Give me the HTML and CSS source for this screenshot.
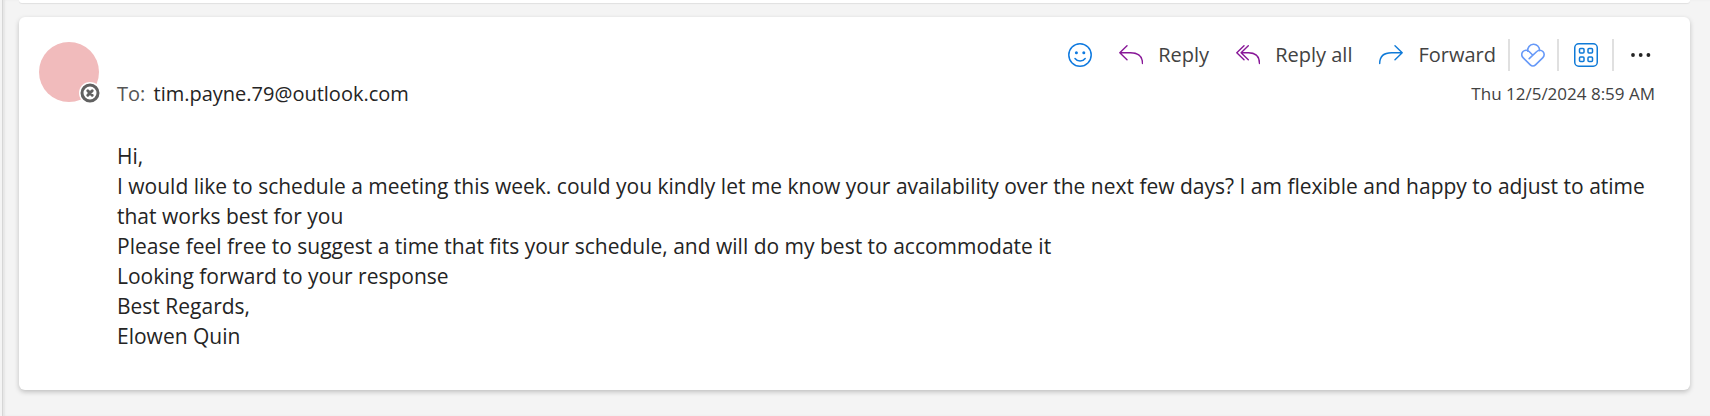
FILE: index.html
```html
<!DOCTYPE html>
<html lang="en">
<head>
  <meta charset="UTF-8">
  <meta name="viewport" content="width=device-width, initial-scale=1.0">
  <title>Mail</title>
  <link rel="stylesheet" href="styles.css">
</head>
<body>

<main class="pane">
  <div class="card card-previous"></div>

  <article class="card message">
    <div class="avatar">
      <svg class="presence" viewBox="0 0 22 22" aria-hidden="true">
        <circle cx="11" cy="11" r="11" fill="#fff"/>
        <circle cx="11" cy="11" r="8" fill="#fff" stroke="#616161" stroke-width="3"/>
        <path d="M8.8 8.8l4.4 4.4M13.2 8.8l-4.4 4.4" stroke="#616161" stroke-width="3" stroke-linecap="round"/>
      </svg>
    </div>

    <div class="content">
      <header class="header">
        <div class="toolbar">
          <button class="tool" aria-label="React">
            <svg class="icon" viewBox="0 0 24 24" fill="none" stroke="#0f7ae0" stroke-width="1.5" stroke-linecap="round">
              <circle cx="12" cy="12" r="11.2"/>
              <circle cx="8.4" cy="9.7" r="1.5" fill="#0f7ae0" stroke="none"/>
              <circle cx="15.8" cy="9.7" r="1.5" fill="#0f7ae0" stroke="none"/>
              <path d="M7 15.5c2.6 3.4 7.6 3.4 10.2 0"/>
            </svg>
          </button>
          <button class="tool">
            <svg class="icon" viewBox="0 0 24 24" fill="none" stroke="#881798" stroke-width="1.4" stroke-linecap="round" stroke-linejoin="round">
              <path d="M8 2.8L.8 9.8l7.2 7M.8 9.8h10.7c7.5 0 12 3.7 12 10.7"/>
            </svg>
            Reply
          </button>
          <button class="tool">
            <svg class="icon" viewBox="0 0 24 24" fill="none" stroke="#881798" stroke-width="1.4" stroke-linecap="round" stroke-linejoin="round">
              <path d="M8 2.8l-7.2 7 7.2 7M12.300 2.8l-7.2 7 7.2 7M5.100 9.800h7.400c7 0 11 3.700 11 10.700"/>
            </svg>
            Reply all
          </button>
          <button class="tool">
            <svg class="icon" viewBox="0 0 24 24" fill="none" stroke="#0f7ad8" stroke-width="1.4" stroke-linecap="round" stroke-linejoin="round">
              <path d="M16 2.8l7.2 7-7.2 7M23.2 9.8H12.5C5 9.800.7 13.500.7 20.500"/>
            </svg>
            Forward
          </button>
          <div class="group">
            <button class="tool" aria-label="Loop">
              <svg class="icon" viewBox="0 0 24 24" fill="none" stroke="#6699f8" stroke-width="1.6" stroke-linecap="round" stroke-linejoin="round">
                <path d="M6.8 8.200a5.900 5.900 0 1 1 11.700-.6"/>
                <path d="M8.200 15.700l7.600-7.200a4.300 4.300 0 0 1 6.100 0 4.300 4.300 0 0 1 0 6.100l-7.400 7.300a3.700 3.700 0 0 1-5.200 0L2 14.600a4.300 4.300 0 0 1 0-6.100 4.300 4.300 0 0 1 6.100 0l3.800 3.700"/>
              </svg>
            </button>
          </div>
          <div class="group group-wide">
            <button class="tool" aria-label="Apps">
              <svg class="icon" viewBox="0 0 24 24" fill="none" stroke="#0f7ad8" stroke-width="1.5">
                <rect x=".75" y=".75" width="22.5" height="22.5" rx="4"/>
                <rect x="5.5" y="5.5" width="4.5" height="4.5" rx="1"/>
                <rect x="14" y="5.5" width="4.5" height="4.5" rx="1"/>
                <rect x="5.5" y="14" width="4.5" height="4.5" rx="1"/>
                <rect x="14" y="14" width="4.5" height="4.5" rx="1"/>
              </svg>
            </button>
          </div>
          <div class="group group-wide">
            <button class="tool" aria-label="More actions">
              <svg class="icon" viewBox="0 0 24 24" fill="#242424">
                <circle cx="4" cy="12" r="1.9"/>
                <circle cx="11.7" cy="12" r="1.9"/>
                <circle cx="19.4" cy="12" r="1.9"/>
              </svg>
            </button>
          </div>
        </div>
        <div class="meta">
          <p class="recipient"><span class="label">To:</span> tim.payne.79@outlook.com</p>
          <time class="date" datetime="2024-12-05T08:59">Thu 12/5/2024 8:59 AM</time>
        </div>
      </header>

      <div class="body">
        <p>Hi,</p>
        <p>I would like to schedule a meeting this week. could you kindly let me know your availability over the next few days? I am flexible and happy to adjust to atime that works best for you</p>
        <p>Please feel free to suggest a time that fits your schedule, and will do my best to accommodate it</p>
        <p>Looking forward to your response</p>
        <p>Best Regards,</p>
        <p>Elowen Quin</p>
      </div>
    </div>
  </article>
</main>

</body>
</html>
```
FILE: styles.css
```css
* {
  box-sizing: border-box;
}

body {
  margin: 0;
  background-color: #f4f4f4;
  color: #242424;
  font-family: "Segoe UI", "Open Sans", sans-serif;
  font-size: 20px;
  line-height: 30px;
}

p {
  margin: 0;
}

.pane {
  min-height: 100vh;
  margin-left: 2px;
  padding: 0 20px 26px 16px;
  border-left: 1px solid #d6d6d6;
  box-shadow: inset 2px 0 2px #e6e6e6;
}

.card {
  background-color: #fff;
  border-radius: 6px;
  box-shadow: 0 2px 5px rgba(0, 0, 0, 0.22);
}

.card-previous {
  height: 3px;
  margin: 0 0 14px;
  border-radius: 0 0 6px 6px;
  box-shadow: 0 1px 1px rgba(0, 0, 0, 0.08);
}

/* Message */
.message {
  display: flex;
  gap: 18px;
  padding: 22px 35px 39px 20px;
}

.avatar {
  position: relative;
  flex: none;
  width: 60px;
  height: 60px;
  margin-top: 3px;
  border-radius: 50%;
  background-color: #f1bbbc;
}

.presence {
  position: absolute;
  right: -2px;
  bottom: -2px;
  width: 22px;
  height: 22px;
}

.content {
  flex: 1;
  min-width: 0;
}

/* Toolbar */
.toolbar {
  display: flex;
  justify-content: flex-end;
  align-items: center;
  gap: 27px;
}

.tool {
  display: flex;
  align-items: center;
  gap: 15px;
  padding: 0;
  border: none;
  background: none;
  color: #424242;
  font: inherit;
  cursor: pointer;
}

.icon {
  display: block;
  width: 24px;
  height: 24px;
}

.group {
  display: flex;
  align-items: center;
  height: 32px;
  margin-left: -15px;
  padding-left: 11px;
  border-left: 2px solid #e0e0e0;
}

.group-wide {
  padding-right: 2px;
  padding-left: 15px;
}

.meta {
  display: flex;
  justify-content: space-between;
  align-items: center;
  margin-top: 8px;
}

.label {
  margin-right: 3px;
  color: #555;
}

.date {
  color: #424242;
  font-size: 17px;
}

.body {
  margin-top: 32px;
  font-size: 21px;
}
```
